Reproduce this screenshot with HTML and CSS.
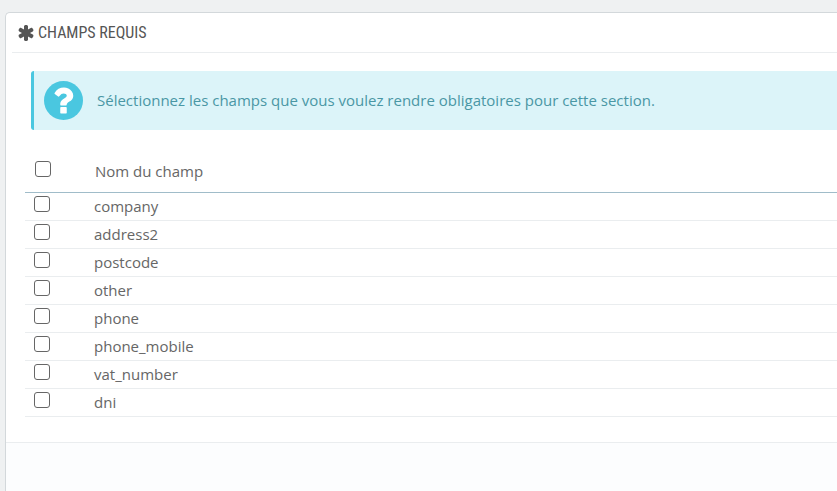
FILE: index.html
```html
<!DOCTYPE html>
<html lang="fr">
<head>
    <meta charset="UTF-8">
    <meta name="viewport" content="width=device-width, initial-scale=1.0">
    <title>Champs requis</title>
    <link rel="stylesheet" href="styles.css">
</head>
<body>
    <form action="" class="panel" id="required-fields">
        <h3 class="panel-heading">
            <svg class="icon-asterisk" viewBox="128 128 1536 1536" aria-hidden="true"><path d="M1546 1050q46 26 59.500 77.500t-12.500 97.500l-64 110q-26 46-77.500 59.500t-97.500-12.500l-266-153v307q0 52-38 90t-90 38h-128q-52 0-90-38t-38-90v-307l-266 153q-46 26-97.500 12.500t-77.500-59.500l-64-110q-26-46-12.500-97.500t59.500-77.500l266-154-266-154q-46-26-59.500-77.500t12.500-97.500l64-110q26-46 77.500-59.500t97.500 12.500l266 153v-307q0-52 38-90t90-38h128q52 0 90 38t38 90v307l266-153q46-26 97.500-12.500t77.500 59.500l64 110q26 46 12.500 97.500t-59.500 77.500l-266 154z"/></svg>
            Champs requis
        </h3>

        <div class="panel-body">
            <div class="alert">
                <svg class="icon-help" viewBox="128 128 1536 1536" aria-hidden="true"><circle cx="896" cy="896" r="768" fill="#4ac7e0"/><path fill="#fff" d="M1024 1376v-192q0-14-9-23t-23-9h-192q-14 0-23 9t-9 23v192q0 14 9 23t23 9h192q14 0 23-9t9-23zm256-672q0-88-55.500-163t-138.500-116-170-41q-243 0-371 213-15 24 8 42l132 100q7 6 19 6 16 0 25-12 53-68 86-92 34-24 86-24 48 0 85.500 26t37.500 59q0 38-20 61t-68 45q-63 28-115.500 86.500t-52.500 125.500v36q0 14 9 23t23 9h192q14 0 23-9t9-23q0-19 21.500-49.500t54.500-49.500q32-18 49-28.500t46-35 44.500-48 28-60.500 12.500-81z"/></svg>
                <p>Sélectionnez les champs que vous voulez rendre obligatoires pour cette section.</p>
            </div>

            <table class="table">
                <thead>
                    <tr>
                        <th class="check"><input type="checkbox" id="check-all" aria-label="Tout sélectionner"></th>
                        <th><label for="check-all">Nom du champ</label></th>
                    </tr>
                </thead>
                <tbody>
                    <tr>
                        <td class="check"><input type="checkbox" name="fields" value="company" id="company"></td>
                        <td><label for="company">company</label></td>
                    </tr>
                    <tr>
                        <td class="check"><input type="checkbox" name="fields" value="address2" id="address2"></td>
                        <td><label for="address2">address2</label></td>
                    </tr>
                    <tr>
                        <td class="check"><input type="checkbox" name="fields" value="postcode" id="postcode"></td>
                        <td><label for="postcode">postcode</label></td>
                    </tr>
                    <tr>
                        <td class="check"><input type="checkbox" name="fields" value="other" id="other"></td>
                        <td><label for="other">other</label></td>
                    </tr>
                    <tr>
                        <td class="check"><input type="checkbox" name="fields" value="phone" id="phone"></td>
                        <td><label for="phone">phone</label></td>
                    </tr>
                    <tr>
                        <td class="check"><input type="checkbox" name="fields" value="phone_mobile" id="phone_mobile"></td>
                        <td><label for="phone_mobile">phone_mobile</label></td>
                    </tr>
                    <tr>
                        <td class="check"><input type="checkbox" name="fields" value="vat_number" id="vat_number"></td>
                        <td><label for="vat_number">vat_number</label></td>
                    </tr>
                    <tr>
                        <td class="check"><input type="checkbox" name="fields" value="dni" id="dni"></td>
                        <td><label for="dni">dni</label></td>
                    </tr>
                </tbody>
            </table>
        </div>

        <div class="panel-footer"></div>
    </form>
</body>
</html>
```

FILE: styles.css
```css
* {box-sizing: border-box;}
body {
    margin: 0; padding: 12px 0 0 5px; min-height: 100vh;
    display: flex; flex-direction: column;
    background-color: #eff1f2; color: #666;
    font: 15px/20px "Open Sans", sans-serif;
}
.panel {
    flex: 1; display: flex; flex-direction: column;
    background-color: #fff; border: 1px solid #d3d8db; border-width: 1px 0 0 1px;
    border-top-left-radius: 5px;
}
.panel-heading {
    display: flex; align-items: center; gap: 4px;
    height: 40px; margin: 0 0 0 6px; padding-left: 6px;
    border-bottom: 1px solid #eaedef; color: #555;
    font: 16px/20px "Ubuntu Condensed", "Roboto Condensed", "Open Sans Condensed", sans-serif;
    text-transform: uppercase;
}
.icon-asterisk {width: 16px; height: 16px; fill: #555;}

.panel-body {padding: 18px 0 25px 19px;}
.alert {
    display: flex; align-items: center; gap: 14px;
    height: 59px; margin-left: 6px; padding-left: 10px;
    background-color: #dcf4f9; color: #4a97a5;
    border-left: 3px solid #4ac7e0; border-radius: 3px 0 0 3px;
}
.alert p {margin: 0; padding-bottom: 2px;}
.icon-help {width: 39px; height: 39px; flex: none;}

.table {width: 100%; margin-top: 20px; border-collapse: separate; border-spacing: 0;}
.table th, .table td {padding: 0; text-align: left; font-weight: normal;}
.table th {height: 43px; border-bottom: 1px solid #a0bcc9; padding-left: 1px;}
.table td {height: 28px; border-bottom: 1px solid #eaedef; padding-bottom: 2px;}
.table .check {width: 69px; padding-left: 9px; vertical-align: top;}
.table th.check {padding: 11px 0 0 10px;}
.table td.check {padding-top: 3px;}
.table label {display: block;}

input[type="checkbox"] {
    appearance: none; display: block; width: 16px; height: 16px; margin: 0;
    background-color: #fff; border: 1px solid #666; border-radius: 3px;
}
input[type="checkbox"]:checked {background-color: #4ac7e0;}

.panel-footer {flex: 1; min-height: 48px; background-color: #fcfdfe; border-top: 1px solid #eaedef;}
```
